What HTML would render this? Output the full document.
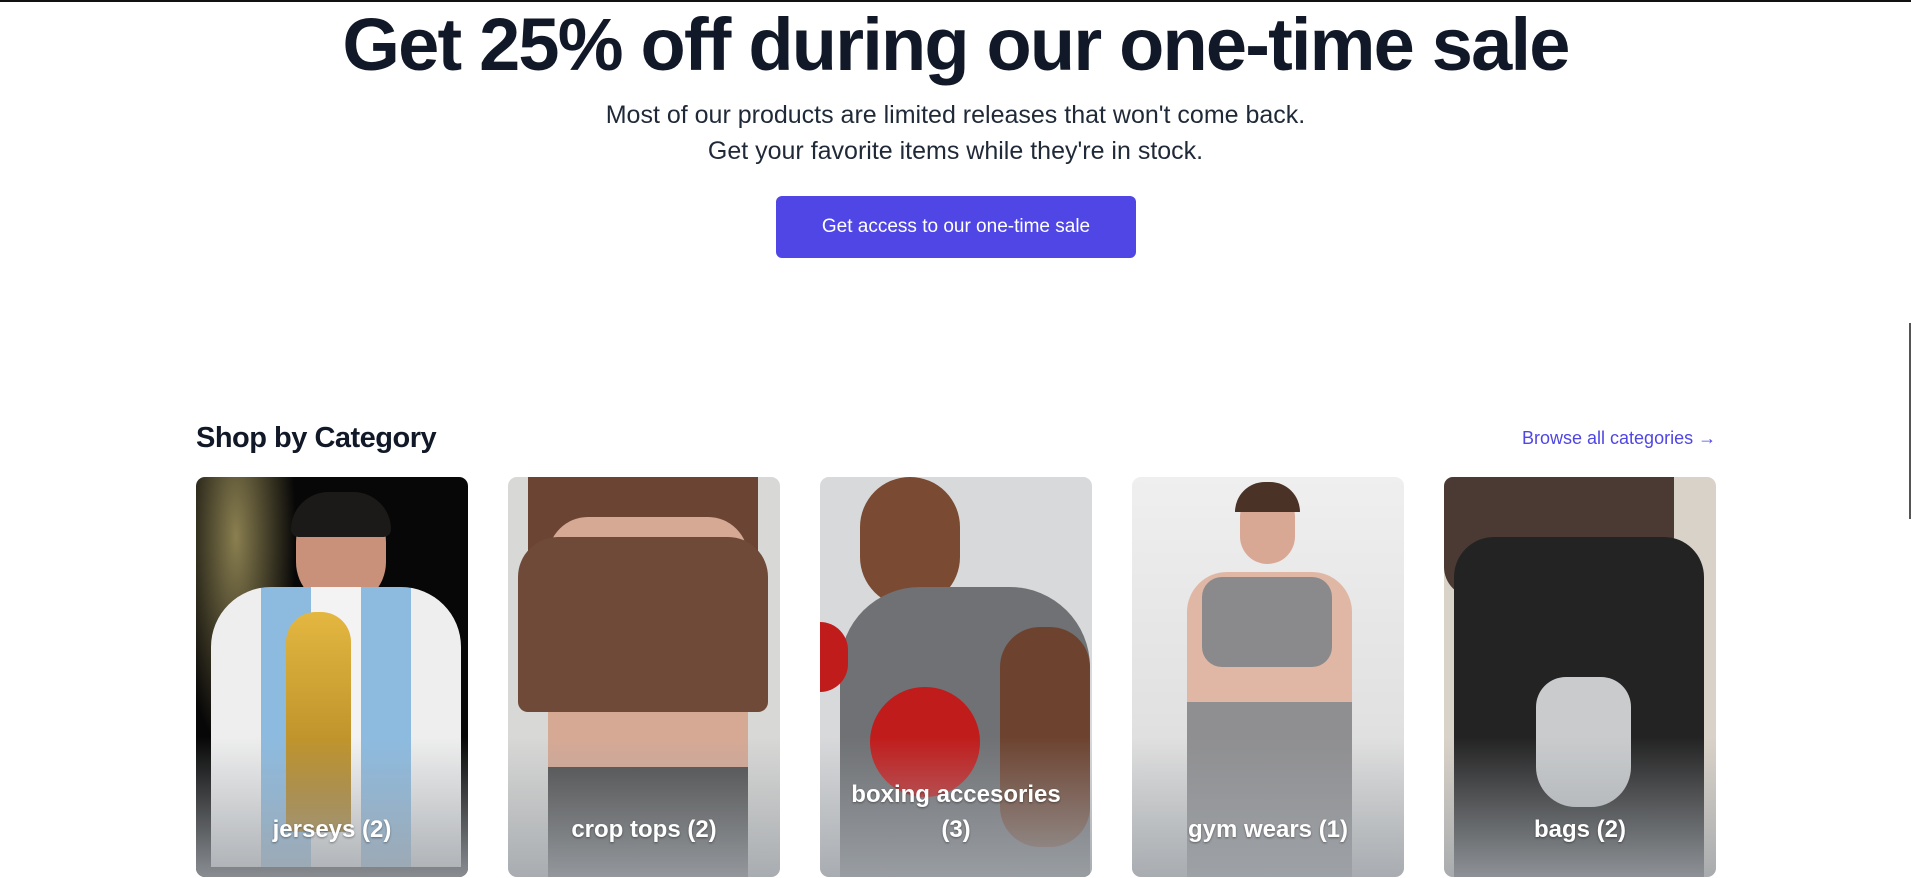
<!DOCTYPE html>
<html><head><meta charset="utf-8"><style>
*{margin:0;padding:0;box-sizing:border-box}
body{width:1911px;height:878px;overflow:hidden;background:#fff;font-family:"Liberation Sans",sans-serif;color:#111827;position:relative;border-top:2px solid #111}
h1{position:absolute;top:3px;left:0;width:1911px;text-align:center;font-size:74px;font-weight:700;letter-spacing:-1.8px;line-height:80px}
.sub{position:absolute;top:95px;left:0;width:1911px;text-align:center;font-size:25px;line-height:36px;color:#1f2937}
.btn{position:absolute;left:776px;top:194px;width:360px;height:62px;background:#4f46e5;border-radius:6px;color:#fff;font-size:19px;display:flex;align-items:center;justify-content:center}
.h2{position:absolute;left:196px;top:420px;font-size:29px;font-weight:700;letter-spacing:-0.5px}
.link{position:absolute;left:1522px;top:426px;font-size:18px;color:#4f46e5}
.card{position:absolute;top:475px;width:272px;height:400px;border-radius:9px;overflow:hidden}
.card .ov{position:absolute;left:0;right:0;bottom:0;height:140px;background:linear-gradient(rgba(255,255,255,0),rgba(160,165,170,.85))}
.card .lb{position:absolute;left:0;right:0;bottom:30px;text-align:center;color:#fff;font-weight:700;font-size:24px;line-height:35px;text-shadow:0 1px 2px rgba(0,0,0,.4)}
.sb{position:absolute;left:1909px;top:321px;width:2px;height:196px;background:#555}
</style></head><body>
<h1>Get 25% off during our one-time sale</h1>
<div class="sub">Most of our products are limited releases that won't come back.<br>Get your favorite items while they're in stock.</div>
<div class="btn">Get access to our one-time sale</div>
<div class="h2">Shop by Category</div>
<div class="link">Browse all categories →</div>
<div class="sb"></div>

<div class="card" style="left:196px;background:radial-gradient(ellipse 60px 220px at 40px 60px,#8a7f50,transparent),#070707">
 <div style="position:absolute;left:100px;top:20px;width:90px;height:110px;border-radius:45px;background:#c9907a"></div>
 <div style="position:absolute;left:95px;top:15px;width:100px;height:45px;border-radius:50px 50px 10px 10px;background:#1c1a18"></div>
 <div style="position:absolute;left:15px;top:110px;width:250px;height:280px;border-radius:60px 60px 0 0;background:linear-gradient(90deg,#eee 0 20%,#8dbbe0 20% 40%,#f3f3f3 40% 60%,#8dbbe0 60% 80%,#eee 80%)"></div>
 <div style="position:absolute;left:90px;top:135px;width:65px;height:220px;border-radius:30px 30px 8px 8px;background:linear-gradient(#e3b740,#a77b1d)"></div>
 <div class="ov"></div><div class="lb">jerseys (2)</div></div>

<div class="card" style="left:508px;background:#d8d8d6">
 <div style="position:absolute;left:20px;top:0;width:230px;height:160px;background:#6b4434;border-radius:0 0 40px 40px"></div>
 <div style="position:absolute;left:40px;top:40px;width:200px;height:370px;background:#d6a995;border-radius:40px"></div>
 <div style="position:absolute;left:10px;top:60px;width:250px;height:175px;background:#6f4a38;border-radius:40px 40px 10px 10px"></div>
 <div style="position:absolute;left:40px;top:290px;width:200px;height:120px;background:#4a4a4a"></div>
 <div class="ov"></div><div class="lb">crop tops (2)</div></div>

<div class="card" style="left:820px;background:#d8d9db">
 <div style="position:absolute;left:40px;top:0;width:100px;height:130px;border-radius:50px;background:#7a4a32"></div>
 <div style="position:absolute;left:20px;top:110px;width:250px;height:300px;border-radius:80px 80px 0 0;background:#6f7174"></div>
 <div style="position:absolute;left:180px;top:150px;width:90px;height:220px;border-radius:40px;background:#6d4330"></div>
 <div style="position:absolute;left:50px;top:210px;width:110px;height:110px;border-radius:50%;background:#c11c1c"></div>
 <div style="position:absolute;left:0;top:145px;width:28px;height:70px;border-radius:0 30px 30px 0;background:#c11c1c"></div>
 <div class="ov"></div><div class="lb" style="bottom:30px">boxing accesories<br>(3)</div></div>

<div class="card" style="left:1132px;background:linear-gradient(#efefef,#d8d8d8)">
 <div style="position:absolute;left:108px;top:12px;width:55px;height:75px;border-radius:28px;background:#d9a894"></div>
 <div style="position:absolute;left:103px;top:5px;width:65px;height:30px;border-radius:30px 30px 0 0;background:#4a3226"></div>
 <div style="position:absolute;left:55px;top:95px;width:165px;height:310px;border-radius:40px;background:#e0b7a4"></div>
 <div style="position:absolute;left:70px;top:100px;width:130px;height:90px;border-radius:20px;background:#8a8a8c"></div>
 <div style="position:absolute;left:55px;top:225px;width:165px;height:180px;background:#8f8f91"></div>
 <div class="ov"></div><div class="lb">gym wears (1)</div></div>

<div class="card" style="left:1444px;background:#d9d2c8">
 <div style="position:absolute;left:0;top:0;width:230px;height:120px;background:#4b3a34;border-radius:0 0 60px 30px"></div>
 <div style="position:absolute;left:10px;top:60px;width:250px;height:340px;background:#232323;border-radius:40px 40px 0 0"></div>
 <div style="position:absolute;left:92px;top:200px;width:95px;height:130px;background:#c9cbcd;border-radius:30px 30px 40px 40px"></div>
 <div class="ov"></div><div class="lb">bags (2)</div></div>
</body></html>
